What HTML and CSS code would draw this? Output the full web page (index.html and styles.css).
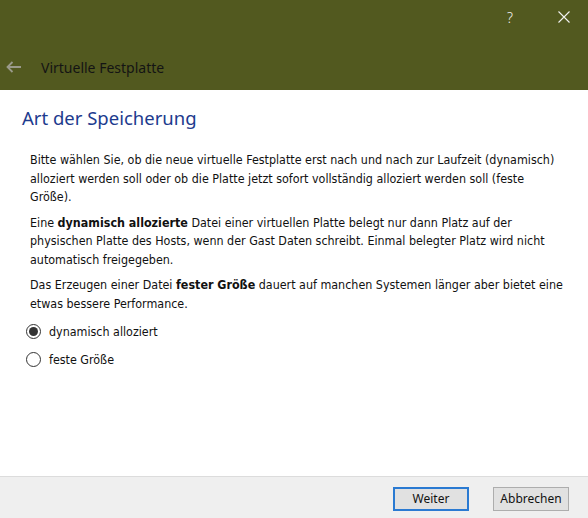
FILE: index.html
```html
<!DOCTYPE html>
<html lang="de">
<head>
<meta charset="utf-8">
<title>Virtuelle Festplatte</title>
<link rel="stylesheet" href="styles.css">
</head>
<body>
<div class="dialog">
  <header class="titlebar">
    <div class="caption-buttons">
      <span class="help">?</span>
      <svg class="close" width="12" height="12" viewBox="0 0 12 12"><path d="M0.5 0.5L11.5 11.5M11.5 0.5L0.5 11.5" stroke="#f2f2f2" stroke-width="1.1" fill="none"/></svg>
    </div>
    <div class="title-row">
      <svg class="back" width="16" height="12" viewBox="0 0 16 12"><path d="M15 6H1.5M6.5 1L1.5 6L6.5 11" stroke="#9a9a8a" stroke-width="1.8" fill="none"/></svg>
      <span class="title">Virtuelle Festplatte</span>
    </div>
  </header>
  <main class="content">
    <h1 class="heading">Art der Speicherung</h1>
    <p class="para">Bitte wählen Sie, ob die neue virtuelle Festplatte erst nach und nach zur Laufzeit (dynamisch)<br>alloziert werden soll oder ob die Platte jetzt sofort vollständig alloziert werden soll (feste<br>Größe).</p>
    <p class="para">Eine <b>dynamisch allozierte</b> Datei einer virtuellen Platte belegt nur dann Platz auf der<br>physischen Platte des Hosts, wenn der Gast Daten schreibt. Einmal belegter Platz wird nicht<br>automatisch freigegeben.</p>
    <p class="para">Das Erzeugen einer Datei <b>fester Größe</b> dauert auf manchen Systemen länger aber bietet eine<br>etwas bessere Performance.</p>
    <div class="options">
      <label class="option"><span class="radio checked"></span><span>dynamisch alloziert</span></label>
      <label class="option"><span class="radio"></span><span>feste Größe</span></label>
    </div>
  </main>
  <footer class="footer">
    <button class="btn primary">Weiter</button>
    <button class="btn">Abbrechen</button>
  </footer>
</div>
</body>
</html>
```
FILE: styles.css
```css
* { box-sizing: border-box; }
html, body { margin: 0; padding: 0; }
body { width: 588px; height: 518px; overflow: hidden; background: #fff; font-family: "DejaVu Sans Condensed", "DejaVu Sans", sans-serif; }
.dialog { display: flex; flex-direction: column; height: 518px; }
.titlebar { background: #52591f; height: 90px; display: flex; flex-direction: column; justify-content: space-between; }
.caption-buttons { display: flex; justify-content: flex-end; align-items: center; height: 34px; padding-right: 18px; gap: 45px; }
.help { color: #f2f2f2; font-family: "Noto Sans", sans-serif; font-size: 14px; font-weight: 300; }
.close { display: block; }
.title-row { display: flex; align-items: center; height: 40px; padding-left: 6px; padding-bottom: 6px; }
.back { margin-right: 19px; }
.title { font-family: "Noto Sans", sans-serif; font-size: 14px; color: #141414; }
.content { flex: 1; padding: 0 20px 0 30px; }
.heading { margin: 15px 0 0 -8px; font-family: "Noto Sans", sans-serif; font-weight: 400; font-size: 18.5px; color: #1d3b8e; line-height: 26px; }
.para { margin: 20px 0 0; font-size: 12.4px; line-height: 18.5px; color: #111; }
.para + .para { margin-top: 7px; }
.options { margin-top: 4px; display: flex; flex-direction: column; }
.option { display: flex; align-items: center; height: 28px; font-size: 12.4px; color: #111; }
.radio { width: 15px; height: 15px; border: 1px solid #333; border-radius: 50%; margin-left: -4px; margin-right: 8px; display: flex; align-items: center; justify-content: center; }
.radio.checked::after { content: ""; width: 9px; height: 9px; border-radius: 50%; background: #333; }
.footer { height: 42px; background: #efefef; border-top: 1px solid #dcdcdc; display: flex; justify-content: flex-end; align-items: center; gap: 24px; padding-right: 19px; padding-top: 2px; }
.btn { width: 76px; height: 24px; background: #e1e1e1; border: 1px solid #adadad; font-family: "Noto Sans", sans-serif; font-size: 12px; color: #111; padding: 0; }
.btn.primary { border: 2px solid #2a7ad2; }
```
